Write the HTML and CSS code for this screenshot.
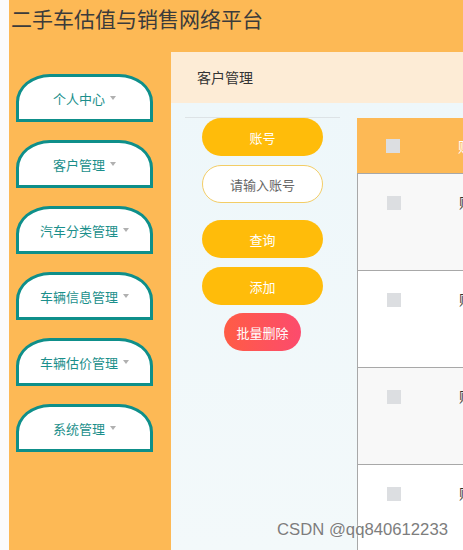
FILE: index.html
```html
<!DOCTYPE html>
<html lang="zh-CN">
<head>
  <meta charset="UTF-8">
  <meta name="viewport" content="width=device-width, initial-scale=1.0">
  <title>二手车估值与销售网络平台</title>
  <link rel="stylesheet" href="styles.css">
</head>
<body>
  <div class="ghost"></div>
  <div class="app">
    <div class="header">二手车估值与销售网络平台</div>
    <div class="body">
      <div class="sidebar">
        <div class="nav-item">个人中心<span class="caret"></span></div>
        <div class="nav-item">客户管理<span class="caret"></span></div>
        <div class="nav-item">汽车分类管理<span class="caret"></span></div>
        <div class="nav-item">车辆信息管理<span class="caret"></span></div>
        <div class="nav-item">车辆估价管理<span class="caret"></span></div>
        <div class="nav-item">系统管理<span class="caret"></span></div>
      </div>
      <div class="main">
        <div class="breadcrumb">客户管理</div>
        <div class="content">
          <div class="search">
            <div class="btn label-btn">账号</div>
            <input class="search-input" type="text" placeholder="请输入账号">
            <div class="btn query-btn">查询</div>
            <div class="btn add-btn">添加</div>
            <div class="btn del-btn">批量删除</div>
          </div>
          <div class="table">
            <div class="row head">
              <div class="cell"><span class="check"></span></div>
              <div class="cell text">账号</div>
            </div>
            <div class="row odd">
              <div class="cell"><span class="check"></span></div>
              <div class="cell text">账号1</div>
            </div>
            <div class="row">
              <div class="cell"><span class="check"></span></div>
              <div class="cell text">账号2</div>
            </div>
            <div class="row odd">
              <div class="cell"><span class="check"></span></div>
              <div class="cell text">账号3</div>
            </div>
            <div class="row">
              <div class="cell"><span class="check"></span></div>
              <div class="cell text">账号4</div>
            </div>
          </div>
        </div>
      </div>
    </div>
  </div>
  <div class="watermark">CSDN @qq840612233</div>
</body>
</html>
```

FILE: styles.css
```css
body {
  margin: 0;
  width: 463px;
  height: 550px;
  overflow: hidden;
  display: flex;
  font-family: "Noto Sans CJK SC", "Liberation Sans", sans-serif;
  background: #fff;
}
.ghost {
  width: 9px;
  flex: none;
  background: #fbfbfb;
}
.app {
  flex: 1;
  display: flex;
  flex-direction: column;
  min-width: 0;
}
.header {
  height: 52px;
  flex: none;
  background: #fdb955;
  color: #3b3b3b;
  font-size: 21px;
  line-height: 36px;
  padding-left: 2px;
  white-space: nowrap;
}
.body {
  flex: 1;
  display: flex;
  min-height: 0;
}
.sidebar {
  width: 162px;
  flex: none;
  background: #fdb955;
  padding: 22px 0 0 7px;
  box-sizing: border-box;
  display: flex;
  flex-direction: column;
  gap: 18px;
}
.nav-item {
  width: 137px;
  height: 48px;
  box-sizing: border-box;
  border: 3px solid #0e8f8a;
  border-radius: 34px 34px 0 0 / 28px 28px 0 0;
  background: #fff;
  color: #1b8f8b;
  font-size: 13px;
  display: flex;
  align-items: center;
  justify-content: center;
}
.caret {
  display: inline-block;
  margin-left: 5px;
  border-left: 3.5px solid transparent;
  border-right: 3.5px solid transparent;
  border-top: 4px solid #b0b0b0;
}
.main {
  flex: 1;
  display: flex;
  flex-direction: column;
  min-width: 0;
}
.breadcrumb {
  height: 51px;
  flex: none;
  background: #fdecd6;
  color: #333;
  font-size: 14px;
  line-height: 51px;
  padding-left: 26px;
}
.content {
  flex: 1;
  display: flex;
  background: linear-gradient(180deg, #eef7fa, #f3f9fa);
  min-height: 0;
}
.search {
  width: 186px;
  flex: none;
  padding: 14px 17px 0 14px;
  box-sizing: border-box;
  display: flex;
  flex-direction: column;
  align-items: center;
}
.search::before {
  content: "";
  align-self: stretch;
  height: 1px;
  background: #dde3e6;
}
.btn {
  width: 121px;
  height: 38px;
  border-radius: 19px;
  background: #ffbc0a;
  color: #fff;
  font-size: 13px;
  display: flex;
  align-items: center;
  justify-content: center;
  flex: none;
}
.search-input {
  width: 121px;
  height: 38px;
  margin-top: 9px;
  box-sizing: border-box;
  border: 1px solid #f3cd66;
  border-radius: 19px;
  background: #fff;
  text-align: center;
  font-family: inherit;
  font-size: 13px;
  outline: none;
}
.search-input::placeholder {
  color: #666;
}
.query-btn {
  margin-top: 17px;
}
.add-btn {
  margin-top: 9px;
}
.del-btn {
  width: 77px;
  margin-top: 8px;
  background: linear-gradient(90deg, #ff5c45, #fc4b6d);
}
.table {
  flex: 1;
  margin-top: 15px;
  min-width: 0;
  overflow: hidden;
}
.row {
  display: grid;
  grid-template-columns: 72px 1fr;
  height: 97px;
  box-sizing: border-box;
  border-top: 1px solid #a8a8a8;
  border-left: 1px solid #a8a8a8;
  background: #fff;
  color: #333;
  font-size: 14px;
}
.row.odd {
  background: #f8f8f8;
}
.row.head {
  height: 55px;
  border: none;
  background: #fdb955;
  color: #fff;
  align-items: center;
}
.cell {
  padding-left: 29px;
  white-space: nowrap;
}
.row:not(.head) .cell {
  padding-top: 22px;
}
.row:not(.head) .text {
  padding-top: 18px;
}
.check {
  display: block;
  width: 14px;
  height: 14px;
  background: #dcdee1;
}
.watermark {
  position: absolute;
  left: 277px;
  top: 520px;
  font-family: "Liberation Sans", sans-serif;
  font-size: 16.7px;
  color: #7d7d7d;
  text-shadow: 0 0 2px #fff;
}
```
